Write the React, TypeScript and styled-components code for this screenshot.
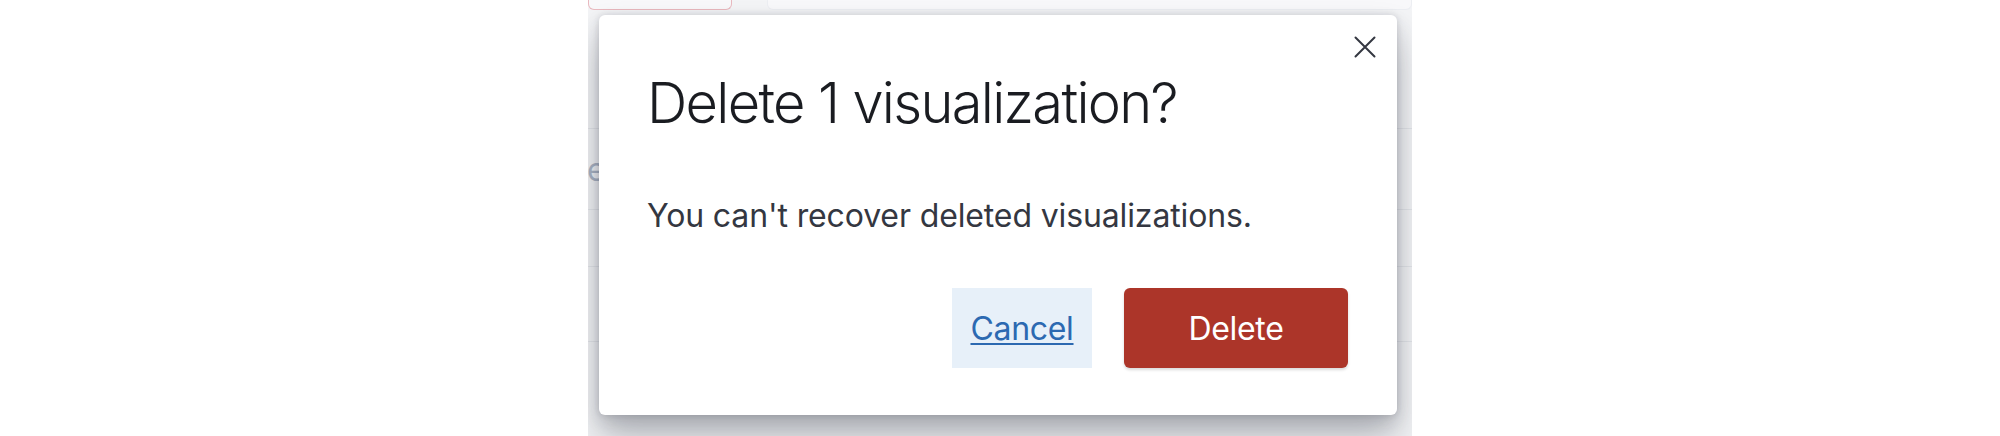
import React from "react";
import styled, { createGlobalStyle } from "styled-components";

const GlobalStyle = createGlobalStyle`
  html, body {
    margin: 0;
    padding: 0;
    background: #ffffff;
    font-family: Inter, "Noto Sans", "Liberation Sans", sans-serif;
  }
`;

const Page = styled.div`
  width: 2000px;
  height: 436px;
  display: flex;
  justify-content: center;
  overflow: hidden;
`;

const Stage = styled.div`
  position: relative;
  width: 824px;
  height: 436px;
  background: #f3f4f6;
  overflow: hidden;
`;

// page content seen through the overlay
const TopBar = styled.div`
  height: 10px;
  display: flex;
  gap: 35px;
`;

const TopBox = styled.div<{ $border: string; $width?: string }>`
  box-sizing: border-box;
  width: ${(p) => p.$width || "auto"};
  flex: ${(p) => (p.$width ? "none" : "1")};
  height: 10px;
  border: 1px solid ${(p) => p.$border};
  border-top: none;
  border-radius: 0 0 6px 6px;
  background: #f8f8fa;
`;

const Row = styled.div<{ $height: number }>`
  height: ${(p) => p.$height}px;
  border-bottom: 1px solid #e4e6ea;
  display: flex;
  align-items: center;
  box-sizing: border-box;
`;

const FadedText = styled.span`
  font-size: 32px;
  color: #aab4c4;
  white-space: nowrap;
  margin-left: -1px;
`;

const Overlay = styled.div`
  position: absolute;
  inset: 0;
  padding: 15px 0 0 11px;
`;

const Modal = styled.div`
  position: relative;
  box-sizing: border-box;
  width: 798px;
  height: 400px;
  background: #ffffff;
  border-radius: 6px;
  box-shadow: 0 0 6px rgba(40, 45, 60, 0.14), 0 6px 16px rgba(40, 45, 60, 0.14),
    0 24px 36px rgba(40, 45, 60, 0.3);
  display: flex;
  flex-direction: column;
`;

const CloseButton = styled.button`
  position: absolute;
  top: 8px;
  right: 8px;
  width: 48px;
  height: 48px;
  padding: 0;
  border: none;
  background: transparent;
  display: flex;
  align-items: center;
  justify-content: center;
  color: #343741;
`;

const Header = styled.div`
  padding: 48px 48px 32px;
`;

const Title = styled.h1`
  margin: 0;
  font-size: 56px;
  line-height: 80px;
  font-weight: 300;
  letter-spacing: -0.03em;
  color: #1a1c21;
`;

const Body = styled.div`
  padding: 17px 48px 0;
  font-size: 32px;
  line-height: 48px;
  letter-spacing: -0.004em;
  color: #343741;
`;

const Footer = styled.div`
  margin-top: auto;
  padding: 0 49px 47px 48px;
  display: flex;
  justify-content: flex-end;
  gap: 32px;
`;

const Button = styled.button<{ $danger?: boolean }>`
  height: 80px;
  min-width: ${(p) => (p.$danger ? "224px" : "140px")};
  padding: 0 16px;
  border: none;
  border-radius: ${(p) => (p.$danger ? "6px" : "0")};
  font-family: Inter, "Noto Sans", "Liberation Sans", sans-serif;
  font-size: 32px;
  font-weight: 400;
  letter-spacing: -0.01em;
  color: ${(p) => (p.$danger ? "#ffffff" : "#2c69b1")};
  background: ${(p) => (p.$danger ? "#ac3529" : "#e7f0f9")};
  text-decoration: ${(p) => (p.$danger ? "none" : "underline")};
  text-decoration-thickness: 2px;
  text-underline-offset: 3px;
  box-shadow: ${(p) => (p.$danger ? "0 2px 3px rgba(0, 0, 0, 0.15)" : "none")};
`;

export default function App() {
  return (
    <>
      <GlobalStyle />
      <Page>
        <Stage>
          <TopBar>
            <TopBox $border="#e9b9bf" $width="144px" />
            <TopBox $border="#eceef2" />
          </TopBar>
          <Row $height={119} />
          <Row $height={81}>
            <FadedText>edit visualization</FadedText>
          </Row>
          <Row $height={57} />
          <Row $height={75} />
          <Overlay>
            <Modal>
              <CloseButton aria-label="Close">
                <svg width="22" height="22" viewBox="0 0 22 22">
                  <path
                    d="M1.5 1.5 L20.5 20.5 M20.5 1.5 L1.5 20.5"
                    stroke="currentColor"
                    strokeWidth="2"
                    strokeLinecap="round"
                  />
                </svg>
              </CloseButton>
              <Header>
                <Title>Delete 1 visualization?</Title>
              </Header>
              <Body>You can't recover deleted visualizations.</Body>
              <Footer>
                <Button>Cancel</Button>
                <Button $danger>Delete</Button>
              </Footer>
            </Modal>
          </Overlay>
        </Stage>
      </Page>
    </>
  );
}
